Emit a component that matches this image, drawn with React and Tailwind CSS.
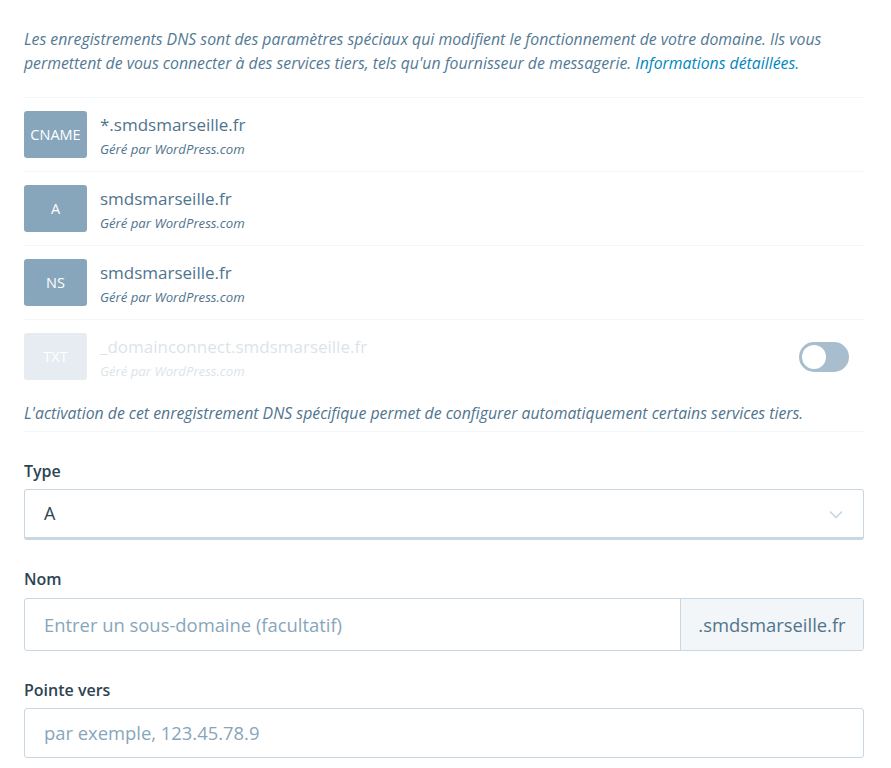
import React from 'react';

const records = [
    { type: 'CNAME', name: '*.smdsmarseille.fr' },
    { type: 'A', name: 'smdsmarseille.fr' },
    { type: 'NS', name: 'smdsmarseille.fr' },
];

const RecordRow = ({ type, name, faded, children }) => (
    <div className="flex items-center pt-[13px] pb-[13px]">
        <div className={`flex items-center ${faded ? 'opacity-20' : ''}`}>
            <div className="w-[63px] h-[47px] rounded-[3px] bg-[#87a6bc] text-white text-[14.5px] flex items-center justify-center shrink-0">
                {type}
            </div>
            <div className="ml-[13px] pt-[2px]">
                <div className="text-[17px] leading-[24px] text-[#4f748e]">{name}</div>
                <div className="text-[13.2px] leading-[18px] italic text-[#4f748e] mt-[3px]">Géré par WordPress.com</div>
            </div>
        </div>
        {children}
    </div>
);

const App = () => {
    return (
        <div className="bg-white min-h-screen pl-[24px] pr-[27px] pt-[27px] pb-[10px] font-['Open_Sans',sans-serif] w-[891px] box-border">
            <p className="text-[15.8px] leading-[24px] italic text-[#537994] pb-[22px] border-b border-[#f3f6f8]">
                Les enregistrements DNS sont des paramètres spéciaux qui modifient le fonctionnement de votre domaine. Ils vous permettent de vous connecter à des services tiers, tels qu'un fournisseur de messagerie.{' '}
                <a className="text-[#0087be]">Informations détaillées.</a>
            </p>

            {records.map((r, i) => (
                <div key={i} className="border-b border-[#f3f6f8]">
                    <RecordRow type={r.type} name={r.name} />
                </div>
            ))}

            <div className="border-b border-[#f3f6f8] pb-[6px]">
                <RecordRow type="TXT" name="_domainconnect.smdsmarseille.fr" faded>
                    <div className="ml-auto mr-[15px] w-[50px] h-[30px] rounded-full bg-[#a8bece] p-[3px] flex items-center">
                        <div className="w-[24px] h-[24px] rounded-full bg-white" />
                    </div>
                </RecordRow>
                <p className="text-[15.8px] leading-[24px] italic text-[#4f748e] mt-[8px]">
                    L'activation de cet enregistrement DNS spécifique permet de configurer automatiquement certains services tiers.
                </p>
            </div>

            <div className="mt-[27px]">
                <label className="block text-[16px] leading-[24px] font-semibold text-[#2e4453] mb-[6px]">Type</label>
                <div className="h-[51px] border border-[#c8d7e1] border-b-[3px] rounded-[3px] flex items-center px-[19px] text-[18px] text-[#2e4453]">
                    <span>A</span>
                    <svg className="ml-auto" width="16" height="16" viewBox="0 0 16 16" fill="none" stroke="#c8d7e1" strokeWidth="1.6">
                        <path d="M2 5.5l6 6 6-6" />
                    </svg>
                </div>
            </div>

            <div className="mt-[27px]">
                <label className="block text-[16px] leading-[24px] font-semibold text-[#2e4453] mb-[7px]">Nom</label>
                <div className="flex h-[53px] border border-[#c8d7e1] rounded-[3px]">
                    <div className="flex-1 flex items-center px-[19px] text-[18.4px] text-[#87a6bc]">
                        Entrer un sous-domaine (facultatif)
                    </div>
                    <div className="w-[183px] bg-[#f3f6f8] border-l border-[#c8d7e1] flex items-center justify-center text-[18.4px] text-[#4f748e]">
                        .smdsmarseille.fr
                    </div>
                </div>
            </div>

            <div className="mt-[27px]">
                <label className="block text-[16px] leading-[24px] font-semibold text-[#2e4453] mb-[6px]">Pointe vers</label>
                <div className="h-[50px] border border-[#c8d7e1] rounded-[3px] flex items-center px-[19px] text-[18.4px] text-[#87a6bc]">
                    par exemple, 123.45.78.9
                </div>
            </div>
        </div>
    );
};

export default App;
